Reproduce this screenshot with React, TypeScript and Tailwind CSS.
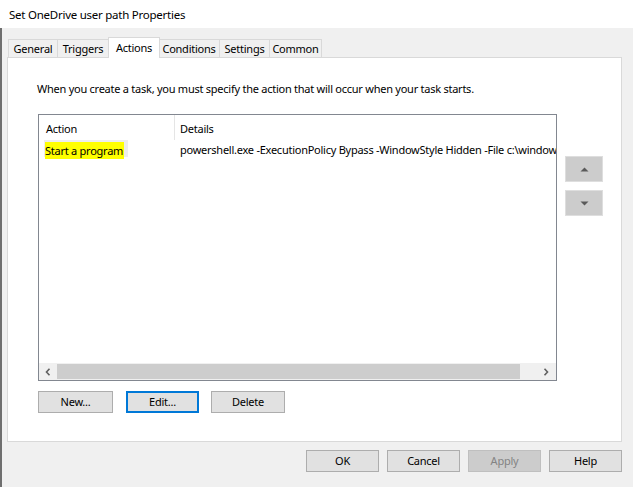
import React from "react";

const font = { fontFamily: '"Noto Sans", "Liberation Sans", sans-serif' };

function Tab({ label, w, selected }: { label: string; w: string; selected?: boolean }) {
  if (selected) {
    return (
      <div
        className={`${w} h-[21px] -ml-px -mr-px -mb-px relative z-10 bg-white border border-b-0 border-[#d9d9d9] flex items-center justify-center text-black shrink-0`}
      >
        {label}
      </div>
    );
  }
  return (
    <div
      className={`${w} h-[18px] -ml-px bg-[#f0f0f0] border border-b-0 border-[#d9d9d9] flex items-center justify-center pt-px text-black shrink-0 first:ml-0`}
    >
      {label}
    </div>
  );
}

function Btn({ label, w = "w-[74px]", focused, disabled }: { label: string; w?: string; focused?: boolean; disabled?: boolean }) {
  return (
    <div
      className={`${w} h-[22px] flex items-center justify-center ${
        focused
          ? "border-2 border-[#0078d7] bg-[#e1e1e1] text-black"
          : disabled
          ? "border border-[#bfbfbf] bg-[#cccccc] text-[#838383]"
          : "border border-[#adadad] bg-[#e1e1e1] text-black"
      }`}
    >
      {label}
    </div>
  );
}

export default function App() {
  return (
    <div
      className="w-[633px] h-[487px] flex flex-col bg-[#f0f0f0] overflow-hidden text-[11px] tracking-[-0.25px]"
      style={font}
    >
      <div className="h-[28px] bg-white flex items-center pl-[9px] pt-[2px] text-[11.5px] text-black shrink-0">
        Set OneDrive user path Properties
      </div>
      <div className="flex-1 border-l-2 border-[#6f6f6f] flex flex-col">
        <div className="ml-[6px] mt-[9px] h-[20px] flex items-end">
          <Tab label="General" w="w-[50px]" />
          <Tab label="Triggers" w="w-[52px]" />
          <Tab label="Actions" w="w-[52px]" selected />
          <Tab label="Conditions" w="w-[62px]" />
          <Tab label="Settings" w="w-[51px]" />
          <Tab label="Common" w="w-[53px]" />
        </div>
        <div className="ml-[5px] w-[615px] h-[385px] bg-white border border-[#d9d9d9] flex flex-col">
          <div className="mt-[22px] ml-[29px] h-[18px] flex items-center text-black">
            When you create a task, you must specify the action that will occur when your task starts.
          </div>
          <div className="flex mt-[16px] ml-[30px]">
            <div className="w-[519px] h-[267px] border border-[#828790] flex flex-col overflow-hidden shrink-0">
              <div className="flex h-[25px] text-black shrink-0">
                <div className="w-[136px] shrink-0 border-r border-[#e5e5e5] pl-[7px] flex items-center pt-[3px]">Action</div>
                <div className="pl-[5px] flex items-center pt-[3px]">Details</div>
              </div>
              <div className="flex h-[19px] text-black shrink-0">
                <div className="w-[136px] shrink-0 pl-[5px] flex">
                  <div className="w-[84px] h-[17px] bg-[#ededed] flex items-start">
                    <span className="ml-px mt-[2px] h-[17px] pr-px bg-[#ffff00] flex items-center pt-px whitespace-nowrap">
                      Start a program
                    </span>
                  </div>
                </div>
                <div className="pl-[5px] pt-[2px] flex items-center whitespace-nowrap">
                  powershell.exe -ExecutionPolicy Bypass -WindowStyle Hidden -File c:\windows\scripts\OneDriveUserPath.ps1
                </div>
              </div>
              <div className="flex-1" />
              <div className="h-[17px] flex bg-[#f0f0f0] shrink-0">
                <div className="w-[18px] flex items-center justify-center">
                  <svg width="6" height="8" viewBox="0 0 6 8">
                    <polyline points="4.5,0.8 1.5,4 4.5,7.2" fill="none" stroke="#606060" strokeWidth="1.6" />
                  </svg>
                </div>
                <div className="w-[463px] my-[1px] bg-[#cdcdcd]" />
                <div className="flex-1 flex items-center justify-end pr-[7px]">
                  <svg width="6" height="8" viewBox="0 0 6 8">
                    <polyline points="1.5,0.8 4.5,4 1.5,7.2" fill="none" stroke="#606060" strokeWidth="1.6" />
                  </svg>
                </div>
              </div>
            </div>
            <div className="ml-[8px] mt-[42px] flex flex-col gap-[8px]">
              <div className="w-[38px] h-[26px] bg-[#cccccc] border border-[#dedede] flex items-center justify-center">
                <svg width="9" height="5" viewBox="0 0 9 5">
                  <polygon points="0.5,4.5 4.5,0.5 8.5,4.5" fill="#5a5a5a" />
                </svg>
              </div>
              <div className="w-[38px] h-[26px] bg-[#cccccc] border border-[#dedede] flex items-center justify-center">
                <svg width="9" height="5" viewBox="0 0 9 5">
                  <polygon points="0.5,0.5 8.5,0.5 4.5,4.5" fill="#5a5a5a" />
                </svg>
              </div>
            </div>
          </div>
          <div className="flex mt-[10px] ml-[30px]">
            <Btn label="New..." w="w-[75px]" />
            <div className="ml-[13px]">
              <Btn label="Edit..." w="w-[73px]" focused />
            </div>
            <div className="ml-[12px]">
              <Btn label="Delete" w="w-[74px]" />
            </div>
          </div>
        </div>
        <div className="mt-[8px] ml-[304px] flex gap-[8px]">
          <Btn label="OK" w="w-[73px]" />
          <Btn label="Cancel" w="w-[73px]" />
          <Btn label="Apply" w="w-[73px]" disabled />
          <Btn label="Help" w="w-[73px]" />
        </div>
      </div>
    </div>
  );
}
